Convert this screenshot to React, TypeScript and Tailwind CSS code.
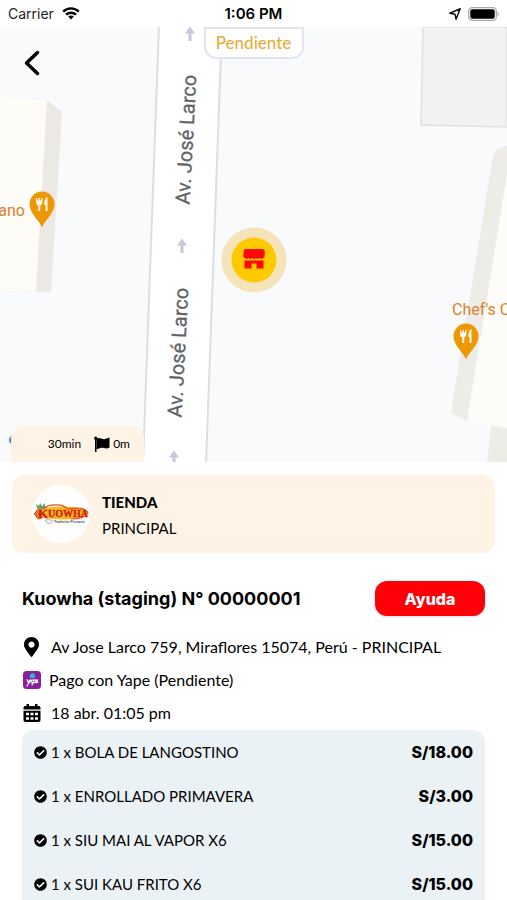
import React from "react";
import { FaCheckCircle, FaMapMarkerAlt } from "react-icons/fa";

const items = [
  { quantity: 1, name: "BOLA DE LANGOSTINO", price: "S/18.00" },
  { quantity: 1, name: "ENROLLADO PRIMAVERA", price: "S/3.00" },
  { quantity: 1, name: "SIU MAI AL VAPOR X6", price: "S/15.00" },
  { quantity: 1, name: "SUI KAU FRITO X6", price: "S/15.00" },
];

function StatusBar() {
  return (
    <header className="grid h-[27px] shrink-0 grid-cols-3 items-center bg-white px-2 font-['Inter',sans-serif] text-sm text-[#222]">
      <div className="flex items-center gap-2">
        <span>Carrier</span>
        <svg viewBox="0 0 18 13" className="h-[13px] w-[18px]" fill="none" stroke="#000" strokeWidth="2.4" aria-hidden="true">
          <path d="M1.2 4.6 C5.5 .3 12.5 .3 16.8 4.6" />
          <path d="M4 7.7 C6.8 5 11.2 5 14 7.7" />
          <path d="M9 12.4 L6.2 9.5 C7.8 8.1 10.2 8.1 11.8 9.5 Z" fill="#000" stroke="none" />
        </svg>
      </div>
      <span className="text-center text-[15px] font-semibold text-black">1:06 PM</span>
      <div className="flex items-center justify-end gap-[7px]">
        <svg viewBox="0 0 12 12" className="size-3" fill="none" stroke="#111" strokeWidth="1.5" strokeLinejoin="round" aria-hidden="true">
          <path d="M11.2 .8 L.8 5.2 L6 6.2 L7 11.2 Z" />
        </svg>
        <svg viewBox="0 0 31 14" className="h-[14px] w-[31px]" aria-hidden="true">
          <rect x=".7" y=".7" width="27.6" height="12.6" rx="3.6" fill="#fff" stroke="#aaa" strokeWidth="1.3" />
          <rect x="2.3" y="2.3" width="24.4" height="9.4" rx="2" fill="#000" />
          <path d="M29.5 4.8 C31.2 5.4 31.2 8.6 29.5 9.2 Z" fill="#aaa" />
        </svg>
      </div>
    </header>
  );
}

function FoodPin({ x, y }: { x: number; y: number }) {
  return (
    <g transform={`translate(${x} ${y})`}>
      <path d="M0 23.500 C-1.500 17.500 -12.500 10 -12.500 0 A12.500 12.500 0 0 1 12.500 0 C12.500 10 1.500 17.500 0 23.500Z" fill="#ee9704" />
      <path d="M-6 -6 V-2 C-6 .5 -4.600 1.300 -3.800 1.500 V7 H-1.800 V1.500 C-1 1.300 .4 .5 .4 -2 V-6 H-.8 V-3.500 H-2.100 V-6 H-3.500 V-3.500 H-4.800 V-6 Z" fill="#fff8e8" />
      <path d="M5.500 -7 C3 -6 2.200 -3.500 2.200 1 H3.500 V7 H5.500 Z" fill="#fff8e8" />
    </g>
  );
}

function DirectionArrow({ x, y }: { x: number; y: number }) {
  return (
    <g transform={`translate(${x} ${y})`} fill="#c5c8da">
      <path d="M0 -7.500 L5 -.5 H-5 Z" />
      <rect x="-1.500" y="-2" width="3" height="9" />
    </g>
  );
}

function StreetMap() {
  return (
    <svg viewBox="0 27 507 435" preserveAspectRatio="xMidYMin slice" className="block h-full w-full" role="img" aria-label="Mapa">
      <rect x="0" y="27" width="507" height="435" fill="#f8fafc" />

      <path d="M423 27 L421 125 L507 127 V27Z" fill="#f0f2f3" stroke="#dfe2e5" strokeWidth="1.500" />

      <path d="M0 97 L47 100 L62 112 L51 292 L0 291Z" fill="#ece9e4" />
      <path d="M0 97 L47 100 L36 291.500 L0 291Z" fill="#fefcf6" />

      <path d="M507 146 L498 149 L493 155 L451 413 L467 421 L507 428Z" fill="#edece7" />
      <path d="M507 174 L467 421 L507 428Z" fill="#fefcf8" />
      <path d="M491 426 L507 428 V462 H487Z" fill="#edece7" />

      <path d="M159 25 L143 464 H206 L222 25Z" fill="#fff" stroke="#dcdee2" strokeWidth="2" />
      <DirectionArrow x={190} y={34} />
      <DirectionArrow x={182} y={246} />
      <DirectionArrow x={174} y={458} />
      <g fill="#616367" stroke="#616367" strokeWidth=".3" fontFamily="Roboto, sans-serif" fontSize="20" textAnchor="middle">
        <text transform="translate(193 140) rotate(-87)">Av. José Larco</text>
        <text transform="translate(185 353) rotate(-87)">Av. José Larco</text>
      </g>

      <g fill="#d9812f" fontFamily="Roboto, sans-serif" fontSize="16">
        <text x="25" y="216" textAnchor="end">ano</text>
        <text x="452" y="315">Chef's C</text>
      </g>
      <FoodPin x={42} y={204} />
      <FoodPin x={466} y={336} />

      <circle cx="14" cy="440" r="5" fill="#5877e8" />

      <circle cx="254" cy="260" r="32.500" fill="#f5e3ba" />
      <circle cx="254" cy="260" r="22.500" fill="#ffc900" />
      <path d="M245.500 249 H262.500 Q264.500 249 264.700 251 V256 Q264.700 258 263 258 Q261.300 260 259.500 258 Q257.500 260 256 258 Q254 260 252 258 Q250.200 260 248.500 258 Q246.700 260 245 258 Q243.300 258 243.300 256 L243.700 251 Q244 249 245.500 249Z" fill="#ff0808" />
      <path d="M244.500 260.500 H263.500 V268.500 H256.500 V263.500 H251.500 V268.500 H244.500Z" fill="#ff0808" />
    </svg>
  );
}

function StoreLogo() {
  return (
    <svg viewBox="0 0 58 58" className="size-[58px] shrink-0" role="img" aria-label="Kuowha">
      <circle cx="29" cy="29" r="29" fill="#fff" />
      <path d="M5 23 L4 19 L7 21 L8 18 L10 21 L13 18 L13 22 L16 21 L13 26 H7Z" fill="#65a26b" />
      <ellipse cx="30" cy="28" rx="26" ry="6.500" fill="#f8b81d" />
      <path d="M11 24 C16 19 30 18 36 24 C47 22 54 24 56 28 C53 33 46 34 39 34" fill="none" stroke="#e64c25" strokeWidth="1.200" />
      <ellipse cx="7" cy="29" rx="4" ry="5.500" fill="#e98b25" />
      <path d="M4 26 L10 32 M10 26 L4 32" stroke="#b95e1b" strokeWidth=".8" />
      <path d="M2 29 L5 26 M2 29 L5 31" stroke="#cf3322" strokeWidth="1" />
      <g fontFamily="Liberation Serif, serif" fontWeight="700" fill="#cf2118" stroke="#cf2118" strokeWidth=".3">
        <text x="6" y="33" fontSize="13">K</text>
        <text x="16" y="32" fontSize="10">UOWHA</text>
      </g>
      <path d="M13 35 Q18 33 21 36 L18 39 Q14 39 13 35Z" fill="#eee" stroke="#aaa" strokeWidth=".7" />
      <text x="22" y="38" fontFamily="Liberation Sans, sans-serif" fontWeight="700" fontSize="3.500" fill="#555">Tradición Peruana</text>
    </svg>
  );
}

function FlagIcon() {
  return (
    <svg viewBox="0 0 16 16" className="size-4" aria-hidden="true">
      <circle cx="1.700" cy="2.200" r="1.600" fill="#000" />
      <path d="M1 2 H2.500 V16 H1Z" />
      <path d="M2.500 2.700 C5.500 .8 8.500 4 11 3 L15.500 1.600 V11.500 C12 14 9 11 6.500 12 L2.500 13.300Z" />
    </svg>
  );
}

function CalendarIcon() {
  return (
    <svg viewBox="0 0 18 20" className="h-5 w-[18px]" aria-hidden="true">
      <path d="M3.500 1 H6 V3 H12 V1 H14.500 V3 H16 Q17.500 3 17.500 5 V6.500 H.5 V5 Q.5 3 2 3 H3.500Z" />
      <path d="M.5 7.800 H17.500 V17 Q17.500 19 15.500 19 H2.500 Q.5 19 .5 17Z" />
      <path d="M3 9.700 H6 V12.300 H3Z M7.500 9.700 H10.500 V12.300 H7.500Z M12 9.700 H15 V12.300 H12Z M3 14.200 H6 V16.800 H3Z M7.500 14.200 H10.500 V16.800 H7.500Z M12 14.200 H15 V16.800 H12Z" fill="#fff" />
    </svg>
  );
}

function YapeIcon() {
  return (
    <svg viewBox="0 0 18 18" className="size-[18px]" aria-hidden="true">
      <rect width="18" height="18" rx="3.500" fill="#8a20a0" />
      <circle cx="9.500" cy="4.800" r="2.600" fill="#34b5cf" />
      <path d="M4 8.500 L5 11 L8 8.500 L4 15 M8 12 C7.500 9 11 8 10.500 10 L9.500 12 M9 14 L11 9 C14 8 13 12 10.500 12 M12.500 11 C15 10 15 8 13.800 9 C12 10 13 13 15 11" fill="none" stroke="#fff" strokeWidth="1.100" strokeLinecap="round" />
    </svg>
  );
}

export default function App() {
  return (
    <div className="flex h-screen w-full flex-col overflow-hidden bg-white font-['Lato',sans-serif] text-black">
      <StatusBar />

      <section className="relative h-[435px] shrink-0 overflow-hidden">
        <StreetMap />
        <button type="button" aria-label="Volver" className="absolute top-5 left-5 flex size-8 items-center justify-start pl-1">
          <svg viewBox="0 0 16 26" className="h-[26px] w-4" fill="none" stroke="#000" strokeWidth="3.500" strokeLinecap="round" strokeLinejoin="round" aria-hidden="true">
            <path d="M13.500 2.500 L2.500 13 L13.500 23.500" />
          </svg>
        </button>
        <div className="absolute top-0 left-1/2 flex h-8 w-[100px] -translate-x-1/2 items-center justify-center rounded-b-xl border-2 border-[#e3e5f1] bg-white text-[17px] font-medium text-[#e6ae3e]">
          Pendiente
        </div>
        <div className="absolute bottom-0 left-[11px] flex h-9 w-[133px] items-center justify-end gap-[13px] rounded-t-xl bg-[#fff3e6] pr-[14px] text-xs">
          <span>30min</span>
          <span className="flex items-center gap-[3px]">
            <FlagIcon />
            0m
          </span>
        </div>
      </section>

      <section className="mx-3 mt-[13px] flex h-[78px] shrink-0 items-center gap-3 rounded-xl bg-[#fff3e6] px-5">
        <StoreLogo />
        <div className="pt-[2px] text-[15px] leading-[26px]">
          <h2 className="font-black">TIENDA</h2>
          <p>PRINCIPAL</p>
        </div>
      </section>

      <main className="flex min-h-0 flex-1 flex-col px-[22px] pt-7">
        <div className="flex h-[35px] shrink-0 items-center justify-between">
          <h1 className="font-['Inter',sans-serif] text-lg font-bold">Kuowha (staging) N° 00000001</h1>
          <button type="button" className="h-[35px] w-[110px] rounded-xl bg-[#ff0008] font-['Inter',sans-serif] text-base font-extrabold text-white shadow-sm">
            Ayuda
          </button>
        </div>

        <ul className="mt-[14px] shrink-0 text-base leading-[33px]">
          <li className="flex items-center gap-[10px]">
            <span className="flex w-[19px] justify-center"><FaMapMarkerAlt className="h-5 w-[15px]" /></span>
            <span>Av Jose Larco 759, Miraflores 15074, Perú - PRINCIPAL</span>
          </li>
          <li className="flex items-center gap-2">
            <span className="flex w-[19px] justify-center"><YapeIcon /></span>
            <span>Pago con Yape (Pendiente)</span>
          </li>
          <li className="flex items-center gap-[10px]">
            <span className="flex w-[19px] justify-center"><CalendarIcon /></span>
            <span>18 abr. 01:05 pm</span>
          </li>
        </ul>

        <ul className="mt-px min-h-0 flex-1 overflow-y-auto rounded-t-xl bg-[#eaf2f6] px-3 text-[15px] [scrollbar-width:none]">
          {items.map((item) => (
            <li key={item.name} className="flex h-11 items-center justify-between">
              <span className="flex items-center gap-1">
                <FaCheckCircle className="size-[13px]" />
                {item.quantity} x {item.name}
              </span>
              <strong className="font-['Inter',sans-serif] text-base font-extrabold">{item.price}</strong>
            </li>
          ))}
        </ul>
      </main>
    </div>
  );
}
